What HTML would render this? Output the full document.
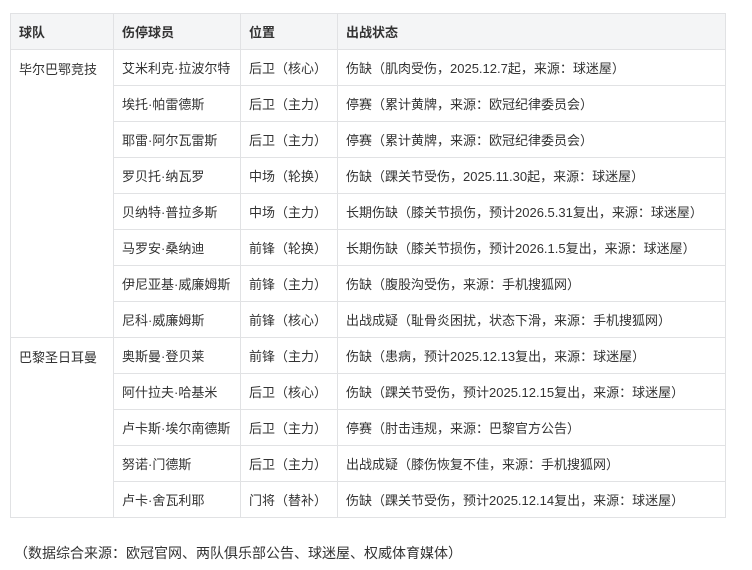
<!DOCTYPE html>
<html><head><meta charset="utf-8"><style>
body{margin:0;background:#fff;font-family:"Liberation Sans","Noto Sans CJK SC",sans-serif;font-size:13px;color:#333;}
table{position:absolute;left:10px;top:13px;border-collapse:collapse;width:716px;}
td,th{border:1px solid #e1e2e4;padding:0 8px;height:35px;text-align:left;vertical-align:middle;white-space:nowrap;}
th{background:#f4f5f6;font-weight:bold;height:35px;}
td.team{vertical-align:top;padding-top:9px;}
.foot{position:absolute;left:14px;top:543px;font-size:14px;}
</style></head><body>
<table>
<colgroup><col style="width:103px"><col style="width:127px"><col style="width:97px"><col></colgroup>
<tr><th>球队</th><th>伤停球员</th><th>位置</th><th>出战状态</th></tr>
<tr><td class="team" rowspan="8">毕尔巴鄂竞技</td><td>艾米利克·拉波尔特</td><td>后卫（核心）</td><td>伤缺（肌肉受伤，2025.12.7起，来源：球迷屋）</td></tr>
<tr><td>埃托·帕雷德斯</td><td>后卫（主力）</td><td>停赛（累计黄牌，来源：欧冠纪律委员会）</td></tr>
<tr><td>耶雷·阿尔瓦雷斯</td><td>后卫（主力）</td><td>停赛（累计黄牌，来源：欧冠纪律委员会）</td></tr>
<tr><td>罗贝托·纳瓦罗</td><td>中场（轮换）</td><td>伤缺（踝关节受伤，2025.11.30起，来源：球迷屋）</td></tr>
<tr><td>贝纳特·普拉多斯</td><td>中场（主力）</td><td>长期伤缺（膝关节损伤，预计2026.5.31复出，来源：球迷屋）</td></tr>
<tr><td>马罗安·桑纳迪</td><td>前锋（轮换）</td><td>长期伤缺（膝关节损伤，预计2026.1.5复出，来源：球迷屋）</td></tr>
<tr><td>伊尼亚基·威廉姆斯</td><td>前锋（主力）</td><td>伤缺（腹股沟受伤，来源：手机搜狐网）</td></tr>
<tr><td>尼科·威廉姆斯</td><td>前锋（核心）</td><td>出战成疑（耻骨炎困扰，状态下滑，来源：手机搜狐网）</td></tr>
<tr><td class="team" rowspan="5">巴黎圣日耳曼</td><td>奥斯曼·登贝莱</td><td>前锋（主力）</td><td>伤缺（患病，预计2025.12.13复出，来源：球迷屋）</td></tr>
<tr><td>阿什拉夫·哈基米</td><td>后卫（核心）</td><td>伤缺（踝关节受伤，预计2025.12.15复出，来源：球迷屋）</td></tr>
<tr><td>卢卡斯·埃尔南德斯</td><td>后卫（主力）</td><td>停赛（肘击违规，来源：巴黎官方公告）</td></tr>
<tr><td>努诺·门德斯</td><td>后卫（主力）</td><td>出战成疑（膝伤恢复不佳，来源：手机搜狐网）</td></tr>
<tr><td>卢卡·舍瓦利耶</td><td>门将（替补）</td><td>伤缺（踝关节受伤，预计2025.12.14复出，来源：球迷屋）</td></tr>
</table>
<div class="foot">（数据综合来源：欧冠官网、两队俱乐部公告、球迷屋、权威体育媒体）</div>
</body></html>
